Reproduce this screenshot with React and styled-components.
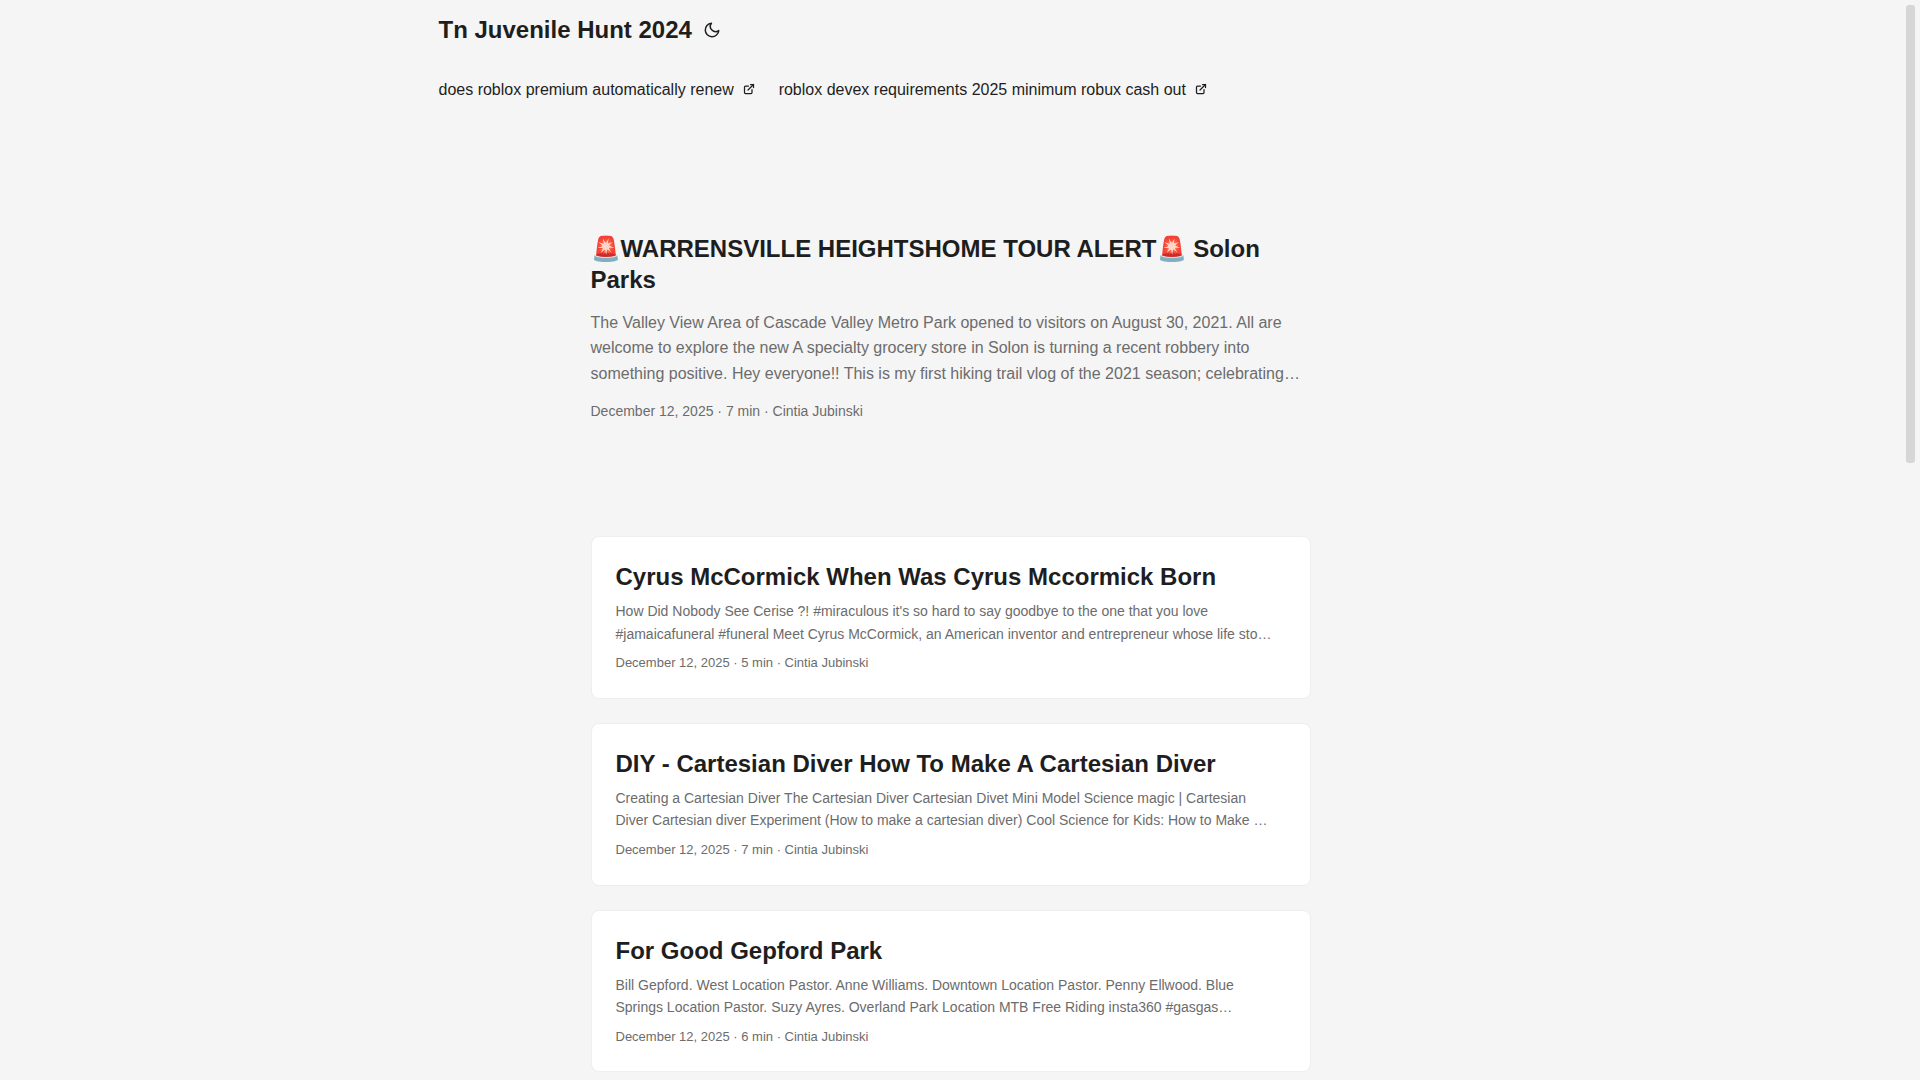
import styled, { createGlobalStyle } from "styled-components";

const GlobalStyle = createGlobalStyle`
  *,
  ::before,
  ::after {
    box-sizing: border-box;
  }

  html {
    scrollbar-width: none;
  }

  body {
    margin: 0;
    padding-right: 19px;
    background: rgb(245, 245, 245);
    color: rgb(30, 30, 30);
    font-family: "Liberation Sans", Arial, sans-serif;
    font-size: 18px;
    line-height: 1.6;
  }
`;

const Nav = styled.nav`
  display: flex;
  flex-wrap: wrap;
  justify-content: space-between;
  max-width: 1072px;
  margin: 0 auto;
  padding: 0 24px;
  line-height: 60px;
`;

const Logo = styled.div`
  display: flex;
`;

const LogoLink = styled.a`
  color: inherit;
  font-size: 24px;
  font-weight: 700;
  text-decoration: none;
`;

const ThemeToggle = styled.button`
  display: flex;
  align-items: center;
  margin: 0 8px;
  padding: 0;
  border: 0;
  background: none;
  color: inherit;
  cursor: pointer;
`;

const Menu = styled.ul`
  display: flex;
  width: 100%;
  gap: 24px;
  margin: 0;
  padding: 0;
  list-style: none;
  font-size: 16px;
  white-space: nowrap;
`;

const MenuLink = styled.a`
  color: inherit;
  text-decoration: none;
`;

const Main = styled.main`
  max-width: 768px;
  margin: 0 auto;
  padding: 24px 24px 0;
`;

const FirstEntry = styled.article`
  display: flex;
  flex-direction: column;
  justify-content: center;
  min-height: 320px;
  margin: 24px 0 48px;
`;

const PostList = styled.div`
  display: grid;
  gap: 24px;
`;

const PostEntry = styled.article`
  padding: 24px;
  background: #fff;
  border: 1px solid rgb(238, 238, 238);
  border-radius: 8px;
`;

const Title = styled.h2`
  margin: 0;
  font-size: 24px;
  line-height: 1.3;
`;

const TitleLink = styled.a`
  color: inherit;
  text-decoration: none;
`;

const Summary = styled.p`
  margin: ${(props) => (props.$large ? "14px 0" : "8px 0")};
  color: rgb(108, 108, 108);
  font-size: ${(props) => (props.$large ? "16px" : "14px")};
  white-space: pre-line;
`;

const Meta = styled.footer`
  color: rgb(108, 108, 108);
  font-size: ${(props) => (props.$large ? "14px" : "13px")};
`;

const ScrollThumb = styled.div`
  position: fixed;
  top: 5px;
  right: 5px;
  width: 9px;
  height: 458px;
  background: rgb(214, 214, 214);
  border-radius: 3px;
`;

const menuItems = [
  "does roblox premium automatically renew",
  "roblox devex requirements 2025 minimum robux cash out",
];

const featured = {
  title: "🚨WARRENSVILLE HEIGHTSHOME TOUR ALERT🚨 Solon Parks",
  summary: `The Valley View Area of Cascade Valley Metro Park opened to visitors on August 30, 2021. All are
welcome to explore the new A specialty grocery store in Solon is turning a recent robbery into
something positive. Hey everyone!! This is my first hiking trail vlog of the 2021 season; celebrating…`,
  minutes: 7,
};

const posts = [
  {
    title: "Cyrus McCormick When Was Cyrus Mccormick Born",
    summary: `How Did Nobody See Cerise ?! #miraculous it's so hard to say goodbye to the one that you love
#jamaicafuneral #funeral Meet Cyrus McCormick, an American inventor and entrepreneur whose life sto…`,
    minutes: 5,
  },
  {
    title: "DIY - Cartesian Diver How To Make A Cartesian Diver",
    summary: `Creating a Cartesian Diver The Cartesian Diver Cartesian Divet Mini Model Science magic | Cartesian
Diver Cartesian diver Experiment (How to make a cartesian diver) Cool Science for Kids: How to Make …`,
    minutes: 7,
  },
  {
    title: "For Good Gepford Park",
    summary: `Bill Gepford. West Location Pastor. Anne Williams. Downtown Location Pastor. Penny Ellwood. Blue
Springs Location Pastor. Suzy Ayres. Overland Park Location MTB Free Riding insta360 #gasgas…`,
    minutes: 6,
  },
];

const MoonIcon = () => (
  <svg
    width="24"
    height="18"
    viewBox="0 0 24 24"
    fill="none"
    stroke="currentColor"
    strokeWidth="2"
    strokeLinecap="round"
    strokeLinejoin="round"
    aria-hidden="true"
  >
    <path d="M21 12.79A9 9 0 1 1 11.21 3 7 7 0 0 0 21 12.79z" />
  </svg>
);

const ExternalIcon = () => (
  <svg
    width="12"
    height="12"
    viewBox="0 0 24 24"
    fill="none"
    stroke="currentColor"
    strokeWidth="2.5"
    strokeLinecap="round"
    strokeLinejoin="round"
    shapeRendering="geometricPrecision"
    aria-hidden="true"
  >
    <path d="M18 13v6a2 2 0 01-2 2H5a2 2 0 01-2-2V8a2 2 0 012-2h6" />
    <path d="M15 3h6v6" />
    <path d="M10 14L21 3" />
  </svg>
);

const EntryBody = ({ post, large }) => (
  <>
    <header>
      <Title as={large ? "h1" : "h2"}>
        <TitleLink href="#">{post.title}</TitleLink>
      </Title>
    </header>
    <Summary $large={large}>{post.summary}</Summary>
    <Meta $large={large}>
      December 12, 2025 · {post.minutes} min · Cintia Jubinski
    </Meta>
  </>
);

export default function App() {
  return (
    <>
      <GlobalStyle />
      <header>
        <Nav>
          <Logo>
            <LogoLink href="#">Tn Juvenile Hunt 2024</LogoLink>
            <ThemeToggle type="button" aria-label="Toggle theme">
              <MoonIcon />
            </ThemeToggle>
          </Logo>
          <Menu>
            {menuItems.map((item) => (
              <li key={item}>
                <MenuLink href="#">
                  {item}&nbsp; <ExternalIcon />
                </MenuLink>
              </li>
            ))}
          </Menu>
        </Nav>
      </header>
      <Main>
        <FirstEntry>
          <EntryBody post={featured} large />
        </FirstEntry>
        <PostList>
          {posts.map((post) => (
            <PostEntry key={post.title}>
              <EntryBody post={post} />
            </PostEntry>
          ))}
        </PostList>
      </Main>
      <ScrollThumb />
    </>
  );
}
